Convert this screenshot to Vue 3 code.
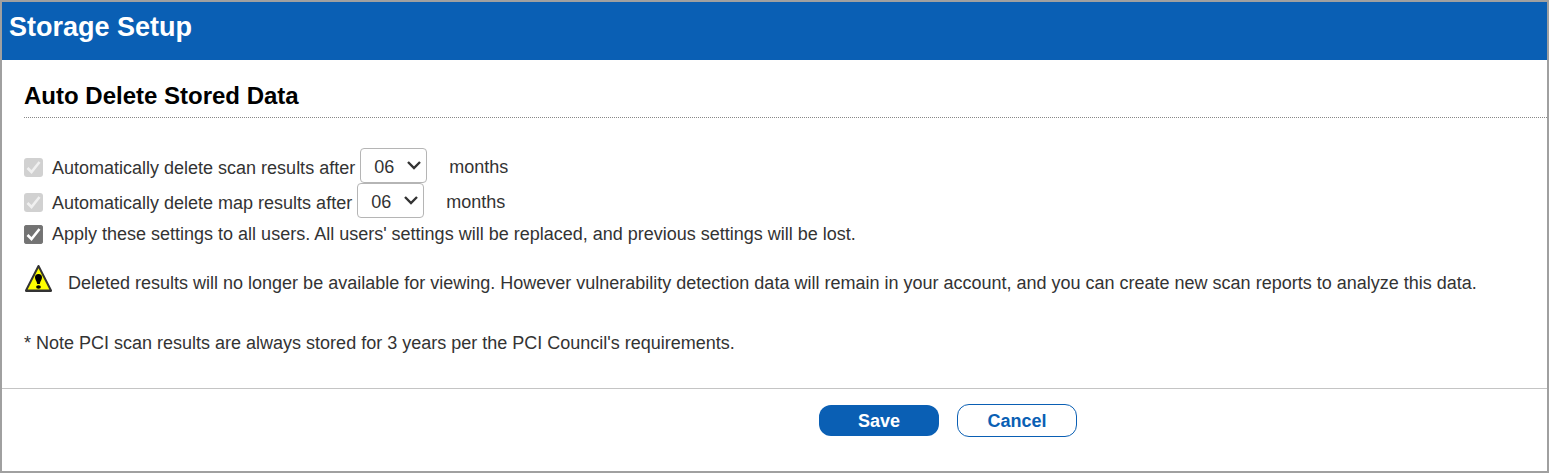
<script setup>
import { reactive, ref } from 'vue'

const rules = reactive([
  { id: 'scan', label: 'Automatically delete scan results after', enabled: true, months: '06' },
  { id: 'map', label: 'Automatically delete map results after', enabled: true, months: '06' },
])
const applyToAll = ref(true)
const monthOptions = Array.from({ length: 12 }, (_, i) => String(i + 1).padStart(2, '0'))
</script>

<template>
  <main class="dialog">
    <header class="title-bar">
      <h1>Storage Setup</h1>
    </header>
    <form class="form" @submit.prevent>
      <section class="content">
        <h2>Auto Delete Stored Data</h2>
        <div v-for="rule in rules" :key="rule.id" class="rule">
          <span class="check">
            <input :id="rule.id" v-model="rule.enabled" type="checkbox" disabled />
            <svg viewBox="0 0 19 19" aria-hidden="true"><path d="M3.500 10l4 4 8-10" /></svg>
          </span>
          <label :for="rule.id" class="rule-label">{{ rule.label }}</label>
          <span class="picker">
            <select v-model="rule.months" :aria-label="rule.label + ' months'">
              <option v-for="m in monthOptions" :key="m">{{ m }}</option>
            </select>
            <svg viewBox="0 0 14 9" aria-hidden="true"><path d="M1 1l6 6 6-6" /></svg>
          </span>
          <span class="unit">months</span>
        </div>
        <div class="apply">
          <span class="check">
            <input id="apply" v-model="applyToAll" type="checkbox" />
            <svg viewBox="0 0 19 19" aria-hidden="true"><path d="M3.500 10l4 4 8-10" /></svg>
          </span>
          <label for="apply">Apply these settings to all users. All users' settings will be replaced, and previous settings will be lost.</label>
        </div>
        <div class="warning">
          <svg class="warning-icon" viewBox="0 0 28 28" aria-hidden="true">
            <path d="M14.500 2L27 26.500H2z" fill="#ff0" stroke="#333" stroke-width="2" stroke-linejoin="round" />
            <path d="M1.500 27h26" stroke="#333" stroke-width="2" />
            <path d="M14.500 10c-2.400 0-3.500 1.500-3.500 3.500 0 2.400 1.800 3.500 2.200 6.500h2.600c.4-3 2.200-4.100 2.200-6.500 0-2-1.100-3.500-3.500-3.500z" />
            <ellipse cx="14.500" cy="23" rx="2.400" ry="1.800" />
          </svg>
          <p>Deleted results will no longer be available for viewing. However vulnerability detection data will remain in your account, and you can create new scan reports to analyze this data.</p>
        </div>
        <p class="note">* Note PCI scan results are always stored for 3 years per the PCI Council's requirements.</p>
      </section>
      <footer class="actions">
        <button type="submit" class="save">Save</button>
        <button type="button" class="cancel">Cancel</button>
      </footer>
    </form>
  </main>
</template>

<style>
body {
  background: #fff;
}
</style>

<style scoped>
.dialog {
  box-sizing: border-box;
  min-height: 100vh;
  border: 2px solid #a0a0a0;
  color: #333;
  font: 18px/22px "Liberation Sans", Arial, sans-serif;
}
h1,
h2,
p {
  margin: 0;
}
.title-bar {
  padding: 9px 7px 17px;
  background: #0a5fb4;
  color: #fff;
}
h1 {
  font-size: 27px;
  line-height: 32px;
}
.content {
  padding: 22px 0 34px 22px;
}
h2 {
  margin-bottom: 30px;
  padding-bottom: 7px;
  border-bottom: 1px dotted #888;
  color: #000;
  font-size: 24px;
  line-height: 28px;
}
.rule,
.apply {
  display: flex;
  align-items: center;
}
.rule {
  height: 35px;
}
.rule .check {
  margin-top: 4px;
}
.rule-label {
  margin-top: 4px;
  margin-right: 5px;
}
.unit {
  margin-top: 2px;
}
.apply {
  height: 32px;
}
.check {
  position: relative;
  display: flex;
  flex: none;
  margin-right: 9px;
}
.check input {
  width: 19px;
  height: 19px;
  margin: 0;
  border-radius: 3px;
  appearance: none;
  background: #fff;
  box-shadow: inset 0 0 0 1px #767676;
}
.check input:checked {
  background: #737373;
}
.check input:disabled {
  background: #d1d1d1;
  box-shadow: none;
}
.check svg {
  position: absolute;
  inset: 0;
  fill: none;
  stroke: #fff;
  stroke-width: 2.6;
  pointer-events: none;
}
.check input:not(:checked) + svg {
  display: none;
}
.check input:disabled + svg {
  stroke: #f0f0f0;
}
.picker {
  position: relative;
  margin-right: 22px;
}
.picker select {
  display: block;
  box-sizing: border-box;
  width: 67px;
  height: 35px;
  padding: 2px 0 0 13px;
  border: 1px solid #b5b5b5;
  border-radius: 4px;
  appearance: none;
  background: #fff;
  color: #333;
  font: inherit;
}
.picker svg {
  position: absolute;
  top: 13px;
  right: 6px;
  width: 14px;
  height: 9px;
  fill: none;
  stroke: #333;
  stroke-width: 2.4;
  pointer-events: none;
}
.warning {
  display: flex;
  align-items: flex-start;
  gap: 16px;
  margin-top: 14px;
}
.warning-icon {
  flex: none;
  width: 28px;
  height: 28px;
}
.warning p {
  padding-top: 8px;
}
.note {
  margin-top: 38px;
}
.actions {
  display: flex;
  justify-content: center;
  align-items: center;
  gap: 18px;
  padding: 15px 0 15px 347px;
  border-top: 1px solid #c4c4c4;
}
button {
  box-sizing: border-box;
  width: 120px;
  height: 31px;
  padding: 0;
  border: 0;
  border-radius: 12px;
  background: #0a5fb4;
  color: #fff;
  font: bold 18px/22px "Liberation Sans", Arial, sans-serif;
}
.cancel {
  height: 33px;
  border: 1px solid #0a5fb4;
  background: #fff;
  color: #0a5fb4;
}
</style>
